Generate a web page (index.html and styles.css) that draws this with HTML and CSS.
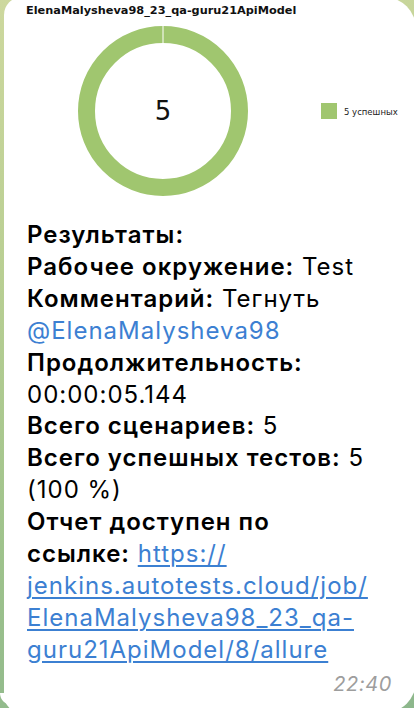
FILE: index.html
```html
<!DOCTYPE html>
<html lang="ru">
<head>
<meta charset="utf-8">
<title>Allure report</title>
<link rel="stylesheet" href="styles.css">
</head>
<body>
<div class="screen">
  <div class="bubble">
    <div class="chart">
      <svg class="chart-svg" width="412" height="208" viewBox="0 0 412 208" xmlns="http://www.w3.org/2000/svg">
        <text class="chart-title" x="22" y="17">ElenaMalysheva98_23_qa-guru21ApiModel</text>
        <circle cx="159" cy="114" r="76.5" fill="none" stroke="#a0c66f" stroke-width="17"/>
        <line x1="159" y1="28" x2="159" y2="47" stroke="#ffffff" stroke-width="1"/>
        <text class="chart-total" x="159" y="123" text-anchor="middle">5</text>
        <rect x="317" y="106" width="16" height="16" fill="#a0c66f"/>
        <text class="chart-legend" x="340" y="118">5 успешных</text>
      </svg>
    </div>
    <div class="text">
      <b>Результаты:</b><br>
      <b>Рабочее окружение:</b> Test<br>
      <b>Комментарий:</b> Тегнуть<br>
      <span class="mention">@ElenaMalysheva98</span><br>
      <b>Продолжительность:</b><br>
      00:00:05.144<br>
      <b>Всего сценариев:</b> 5<br>
      <b>Всего успешных тестов:</b> 5<br>
      (100 %)<br>
      <b>Отчет доступен по</b><br>
      <b>ссылке:</b> <a class="link" href="#">https://<br>jenkins.autotests.cloud/job/<br>ElenaMalysheva98_23_qa-<br>guru21ApiModel/8/allure</a>
    </div>
    <div class="meta"><span class="time">22:40</span></div>
  </div>
</div>
</body>
</html>
```

FILE: styles.css
```css
html, body {
  margin: 0;
  padding: 0;
}

body {
  width: 414px;
  height: 708px;
  overflow: hidden;
  background: linear-gradient(170deg, #cdd89e 0%, #b9cf93 35%, #9fc38c 70%, #8db78c 100%);
}

.screen {
  position: relative;
  width: 414px;
  height: 708px;
  overflow: hidden;
}

.bubble {
  position: relative;
  margin: -3px 0 0 4px;
  width: 412px;
  height: 716px;
  background: #ffffff;
  border-radius: 18px 32px 32px 18px;
  box-sizing: border-box;
}

.bubble::after {
  content: "";
  position: absolute;
  left: -4px;
  bottom: 8px;
  width: 14px;
  height: 12px;
  background: #ffffff;
  border-radius: 0 0 0 12px;
}

.chart {
  height: 208px;
}

.chart-svg {
  display: block;
}

.chart-title {
  font-family: "DejaVu Sans", sans-serif;
  font-weight: bold;
  font-size: 11.3px;
  fill: #111111;
}

.chart-total {
  font-family: "DejaVu Sans", sans-serif;
  font-size: 26px;
  fill: #111111;
}

.chart-legend {
  font-family: "DejaVu Sans", sans-serif;
  font-size: 8.5px;
  fill: #222222;
}

.text {
  padding: 14px 0 0 23px;
  font-family: Inter, "Noto Sans", sans-serif;
  font-size: 24px;
  letter-spacing: 1px;
  line-height: 31.9px;
  color: #000000;
}

.text b {
  font-weight: 600;
}

.mention {
  color: #3c80d2;
}

.link {
  color: #3c80d2;
  text-decoration: underline;
  text-decoration-thickness: 2px;
  text-underline-offset: 3px;
}

.meta {
  display: flex;
  justify-content: flex-end;
  padding: 0 24px 0 0;
}

.time {
  font-family: Inter, "Noto Sans", sans-serif;
  font-style: italic;
  font-size: 20px;
  letter-spacing: 0.6px;
  line-height: 36px;
  color: #9d9d9d;
}
```
